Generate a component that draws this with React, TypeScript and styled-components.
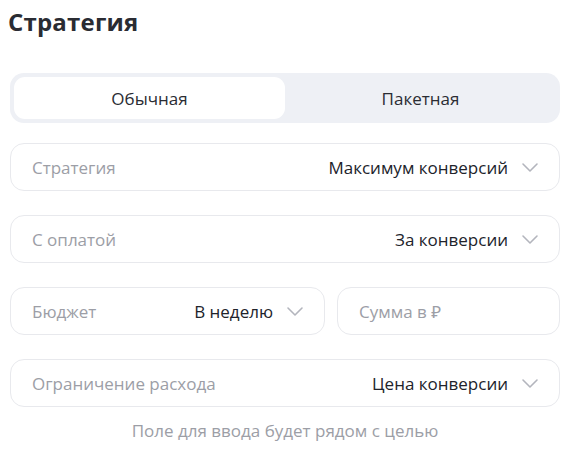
import React from "react";
import styled, { createGlobalStyle } from "styled-components";

const Global = createGlobalStyle`
  html, body { margin: 0; padding: 0; background: #ffffff; }
  body { font-family: "Open Sans", "Noto Sans", sans-serif; color: #21232b; }
`;

const Page = styled.div`
  width: 550px;
  padding: 8px 0 0 10px;
  display: flex;
  flex-direction: column;
`;

const Title = styled.h1`
  margin: 0 0 0 -2px;
  font-size: 24px;
  line-height: 28px;
  font-weight: 700;
  color: #2a2c33;
  letter-spacing: 0.2px;
`;

const Tabs = styled.div`
  margin-top: 37px;
  height: 50px;
  box-sizing: border-box;
  padding: 4px;
  background: #eef0f5;
  border-radius: 14px;
  display: grid;
  grid-template-columns: 1fr 1fr;
`;

const Tab = styled.div<{ $active?: boolean }>`
  display: flex;
  align-items: center;
  justify-content: center;
  border-radius: 11px;
  background: ${(p) => (p.$active ? "#ffffff" : "transparent")};
  font-size: 17px;
  color: #2a2c33;
`;

const Fields = styled.div`
  margin-top: 20px;
  display: flex;
  flex-direction: column;
  gap: 24px;
`;

const Row = styled.div`
  display: grid;
  grid-template-columns: 315px 1fr;
  gap: 12px;
`;

const Field = styled.div`
  height: 48px;
  box-sizing: border-box;
  border: 1px solid #e8e9ed;
  border-radius: 14px;
  padding: 0 19px 0 21px;
  display: flex;
  align-items: center;
  font-size: 17px;
`;

const Label = styled.span`
  color: #9c9ea6;
  flex: 1;
  white-space: nowrap;
`;

const Value = styled.span`
  color: #21232b;
  white-space: nowrap;
`;

const Chevron = styled.svg`
  margin-left: 12px;
  width: 20px;
  height: 20px;
  flex: none;
`;

const Hint = styled.div`
  margin-top: 12px;
  text-align: center;
  font-size: 17px;
  color: #9c9ea6;
`;

const Arrow = () => (
  <Chevron viewBox="0 0 20 20" fill="none">
    <path d="M3 7l7 7 7-7" stroke="#b3b5bd" strokeWidth="1.6" strokeLinecap="round" strokeLinejoin="round" />
  </Chevron>
);

export default function App() {
  return (
    <>
      <Global />
      <Page>
        <Title>Стратегия</Title>
        <Tabs>
          <Tab $active>Обычная</Tab>
          <Tab>Пакетная</Tab>
        </Tabs>
        <Fields>
          <Field>
            <Label>Стратегия</Label>
            <Value>Максимум конверсий</Value>
            <Arrow />
          </Field>
          <Field>
            <Label>С оплатой</Label>
            <Value>За конверсии</Value>
            <Arrow />
          </Field>
          <Row>
            <Field>
              <Label>Бюджет</Label>
              <Value>В неделю</Value>
              <Arrow />
            </Field>
            <Field>
              <Label>Сумма в ₽</Label>
            </Field>
          </Row>
          <Field>
            <Label>Ограничение расхода</Label>
            <Value>Цена конверсии</Value>
            <Arrow />
          </Field>
        </Fields>
        <Hint>Поле для ввода будет рядом с целью</Hint>
      </Page>
    </>
  );
}
